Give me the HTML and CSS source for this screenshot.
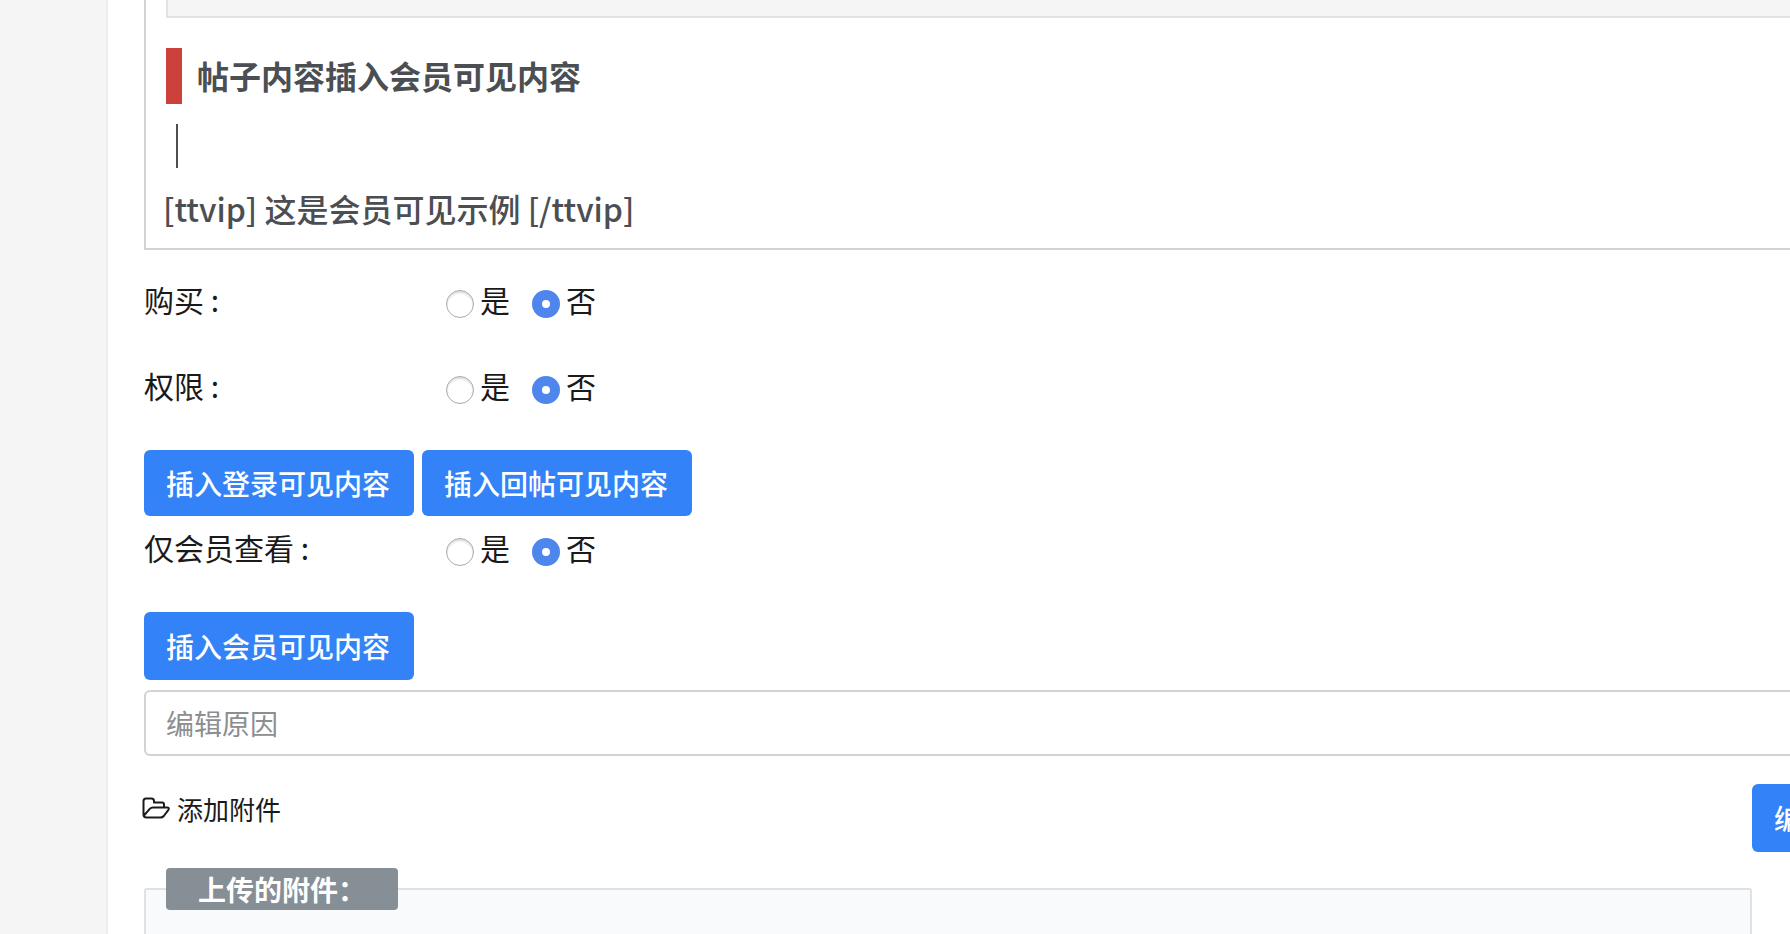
FILE: index.html
```html
<!DOCTYPE html>
<html lang="zh-CN">
<head>
  <meta charset="UTF-8">
  <meta name="viewport" content="width=device-width, initial-scale=1.0">
  <title>编辑帖子</title>
  <link rel="stylesheet" href="styles.css">
</head>
<body>
  <main class="page">
    <form class="post-form">
      <div class="editor">
        <div class="code-box"></div>
        <h2 class="title">帖子内容插入会员可见内容</h2>
        <p class="line"><span class="caret"></span></p>
        <p class="line">[ttvip] 这是会员可见示例 [/ttvip]</p>
      </div>

      <div class="option">
        <span class="option-name">购买 :</span>
        <label class="choice"><input type="radio" name="buy" value="1">是</label>
        <label class="choice"><input type="radio" name="buy" value="0" checked>否</label>
      </div>
      <div class="option">
        <span class="option-name">权限 :</span>
        <label class="choice"><input type="radio" name="access" value="1">是</label>
        <label class="choice"><input type="radio" name="access" value="0" checked>否</label>
      </div>
      <div class="buttons pair">
        <button type="button" class="btn">插入登录可见内容</button>
        <button type="button" class="btn">插入回帖可见内容</button>
      </div>
      <div class="option">
        <span class="option-name">仅会员查看 :</span>
        <label class="choice"><input type="radio" name="vip" value="1">是</label>
        <label class="choice"><input type="radio" name="vip" value="0" checked>否</label>
      </div>
      <div class="buttons">
        <button type="button" class="btn">插入会员可见内容</button>
      </div>

      <input type="text" class="reason" placeholder="编辑原因" aria-label="编辑原因">

      <div class="bottom">
        <div class="attach">
          <a href="#" class="add-file">
            <svg class="folder" viewBox="0 0 28 22" fill="none" stroke="currentColor" stroke-width="2" stroke-linejoin="round">
              <path d="M22 10V7.500Q22 5.500 20 5.500H12V4Q12 1.500 9.500 1.500H4Q1.500 1.500 1.500 4V17.500Q1.500 20.500 4.500 20.500H18.500Q20.500 20.500 21.800 19L26.400 12.800Q27.600 10.500 25 10.500H11Q9 10.500 7.500 12.200L2 18.500"/>
            </svg>
            添加附件
          </a>
          <fieldset class="files">
            <legend>上传的附件：</legend>
          </fieldset>
        </div>
        <button type="submit" class="btn">编辑</button>
      </div>
    </form>
  </main>
</body>
</html>
```

FILE: styles.css
```css
* {
  box-sizing: border-box;
}
body {
  margin: 0;
  background: #f5f5f5;
  color: #1a1a1a;
  font-family: "Noto Sans CJK SC", sans-serif;
  font-size: 30px;
}
.page {
  min-height: 100vh;
  margin-left: 106px;
  padding-left: 36px;
  border-left: 2px solid #eee;
  background: #fff;
  overflow: hidden;
}
/* the form runs past the right edge of the window */
.post-form {
  margin-right: -64px;
}
.editor {
  margin-bottom: 18px;
  padding: 0 20px 9px;
  border: 2px solid #d2d3d4;
  border-top: 0;
  color: #4b4e52;
  font-size: 32px;
}
.code-box {
  height: 18px;
  border: 2px solid #e1e2e3;
  border-top: 0;
  background: #f5f5f5;
}
.title {
  margin: 30px 0 11px;
  padding: 0 0 2px 15px;
  border-left: 16px solid #cd413c;
  font-size: 32px;
  font-weight: 700;
  line-height: 54px;
}
.line {
  display: flex;
  align-items: center;
  height: 62px;
  margin: 0 -3px;
  font-weight: 500;
}
.caret {
  width: 2px;
  height: 44px;
  margin-left: 13px;
  background: #4b4e52;
}
.option {
  display: flex;
  align-items: center;
  height: 72px;
  margin-bottom: 14px;
  padding-bottom: 10px;
}
.option-name {
  width: 302px;
  line-height: 44px;
}
.choice {
  display: flex;
  align-items: center;
  gap: 6px;
  margin-right: 22px;
  line-height: 44px;
}
.choice input {
  appearance: none;
  width: 28px;
  height: 28px;
  margin: 10px 0 0;
  border: 1px solid #a9a9a9;
  border-radius: 50%;
  background: #fff;
  box-shadow: inset 0 2px 2px #ddd;
}
.choice input:checked {
  border: 10px solid #4e86ee;
  box-shadow: none;
}
.buttons {
  display: flex;
  gap: 8px;
  margin: 24px 0 10px;
}
.btn {
  height: 68px;
  padding: 0 24px 0 22px;
  border: 0;
  border-radius: 6px;
  background: #3482f7;
  color: #fff;
  font-family: inherit;
  font-size: 28px;
  font-weight: 500;
}
.pair {
  margin-bottom: 0;
}
.pair .btn {
  height: 66px;
}
.reason {
  display: block;
  width: 100%;
  height: 66px;
  padding: 0 20px;
  border: 2px solid #d2d3d4;
  border-radius: 6px;
  font-family: inherit;
  font-size: 28px;
}
.reason::placeholder {
  color: #8c8e90;
}
.bottom {
  display: flex;
  align-items: flex-start;
  padding-top: 28px;
}
.attach {
  flex: 1;
}
.add-file {
  display: flex;
  align-items: center;
  gap: 7px;
  height: 48px;
  margin-left: -2px;
  color: #1a1a1a;
  font-size: 26px;
  text-decoration: none;
}
.folder {
  width: 28px;
  height: 22px;
}
.files {
  height: 240px;
  margin: 36px 0 0;
  padding: 0 20px;
  border: 2px solid #dfe2e5;
  border-radius: 3px;
  background: #f8fafc;
}
.files legend {
  padding: 0 32px;
  border-radius: 4px;
  background: #868e96;
  color: #fff;
  font-size: 28px;
  font-weight: 700;
  line-height: 42px;
}
```
